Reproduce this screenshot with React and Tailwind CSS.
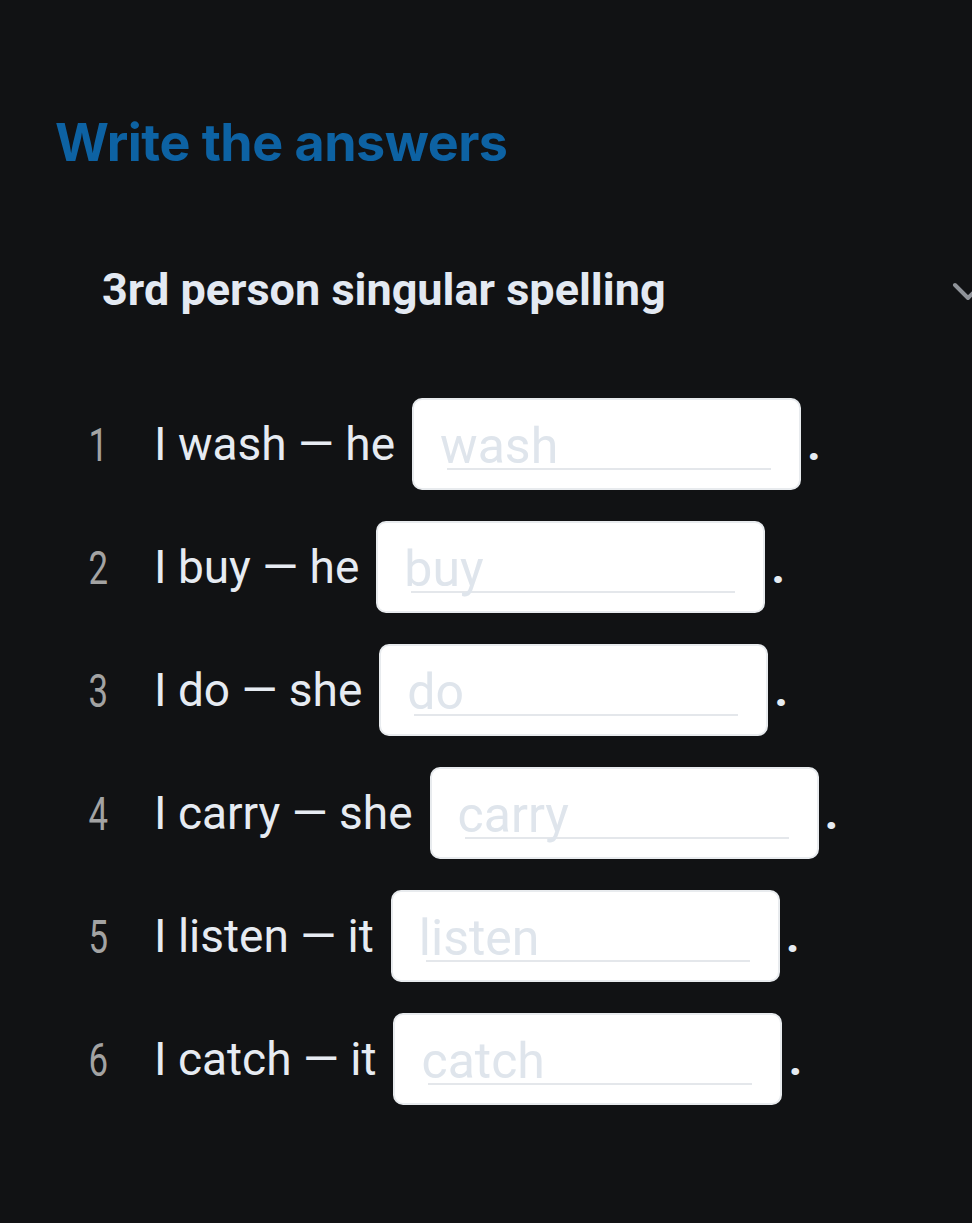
import React from 'react';

const items = [
  { n: 1, text: 'I wash — he', hint: 'wash' },
  { n: 2, text: 'I buy — he', hint: 'buy' },
  { n: 3, text: 'I do — she', hint: 'do' },
  { n: 4, text: 'I carry — she', hint: 'carry' },
  { n: 5, text: 'I listen — it', hint: 'listen' },
  { n: 6, text: 'I catch — it', hint: 'catch' },
];

const AnswerRow = ({ n, text, hint }) => (
  <div className="flex items-center h-[92px]">
    <span className="w-[30px] text-right text-[47px] text-[#a3a3a3] leading-none origin-right scale-x-[0.74]">
      {n}
    </span>
    <span className="ml-[46px] text-[46px] text-[#e6ebf2] leading-none whitespace-nowrap">{text}</span>
    <div className="ml-[17px] w-[389px] h-[92px] shrink-0 bg-white rounded-[10px] border-2 border-[#e8ebee] pt-[24px]">
      <div className="ml-[33px] mr-[28px] border-b-2 border-[#e4e7eb]">
        <span className="block -ml-[7px] text-[50px] leading-[44px] text-[#dfe5ec]">{hint}</span>
      </div>
    </div>
    <span className="ml-[6px] text-[48px] font-bold text-[#e6ebf2] leading-none">.</span>
  </div>
);

export default function App() {
  return (
    <div className="min-h-[1223px] w-full overflow-hidden bg-[#111214] font-['Roboto',sans-serif]">
      <div className="pt-[117px] pl-[55px]">
        <h1 className="text-[52px] font-bold leading-none text-[#0d62a3] font-['Inter',sans-serif] tracking-[-0.5px]">
          Write the answers
        </h1>
      </div>
      <div className="mt-[98px] pl-[102px] flex items-center justify-between mr-[-20px]">
        <h2 className="text-[45px] font-bold leading-none text-[#e3e9f2]">3rd person singular spelling</h2>
        <svg width="40" height="22" viewBox="0 0 40 22" fill="none" className="mt-[6px]">
          <path d="M3 3 L16 16 L29 3" stroke="#8f9399" strokeWidth="4" strokeLinecap="round" strokeLinejoin="round" />
        </svg>
      </div>
      <div className="mt-[86px] pl-[78px] flex flex-col gap-[31px]">
        {items.map((it) => (
          <AnswerRow key={it.n} {...it} />
        ))}
      </div>
    </div>
  );
}
